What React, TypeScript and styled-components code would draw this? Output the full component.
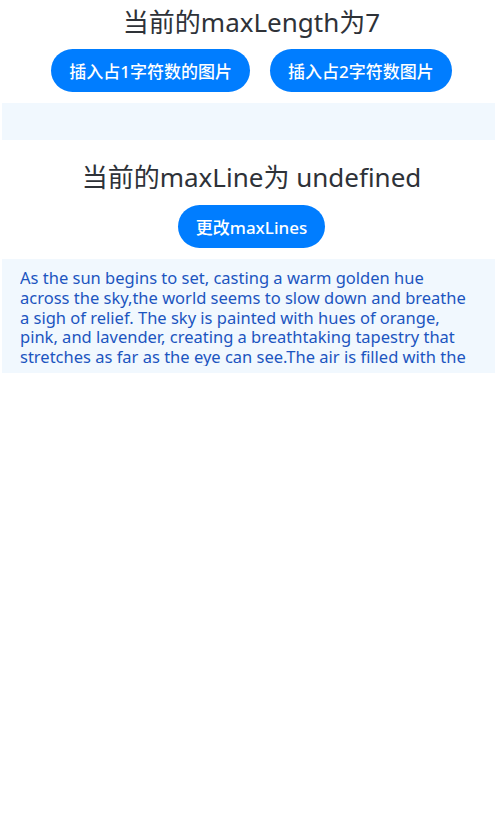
import styled, { createGlobalStyle } from 'styled-components';

const GlobalStyle = createGlobalStyle`
  body {
    margin: 0;
    background: #ffffff;
    font-family: "Noto Sans", "Noto Sans CJK SC", sans-serif;
  }
`;

const LONG_TEXT =
  'As the sun begins to set, casting a warm golden hue across the sky,the world seems to slow down and breathe a sigh of relief. The sky is painted with hues of orange, pink, and lavender, creating a breathtaking tapestry that stretches as far as the eye can see.The air is filled with the sweet scent of blooming flowers and the gentle rustle of leaves.';

const App = () => {
  return (
    <Page>
      <GlobalStyle />
      <Title>当前的maxLength为7</Title>
      <ButtonRow>
        <PillButton>插入占1字符数的图片</PillButton>
        <PillButton>插入占2字符数图片</PillButton>
      </ButtonRow>
      <Panel />
      <Title $spaced>当前的maxLine为 undefined</Title>
      <PillButton>更改maxLines</PillButton>
      <TextPanel>
        <ClippedText>{LONG_TEXT}</ClippedText>
      </TextPanel>
    </Page>
  );
};

const Page = styled.div`
  display: flex;
  flex-direction: column;
  align-items: center;
  width: 503px;
  height: 824px;
  box-sizing: border-box;
  padding-top: 5px;
`;

const Title = styled.div<{ $spaced?: boolean }>`
  font-size: 26px;
  line-height: 34px;
  color: #2e3238;
  margin-top: ${({ $spaced }) => ($spaced ? '20px' : '0')};
`;

const ButtonRow = styled.div`
  display: flex;
  gap: 20px;
  margin-top: 10px;
`;

const PillButton = styled.button`
  height: 43px;
  padding: 0 18px;
  border: none;
  border-radius: 22px;
  background: #007dff;
  color: #ffffff;
  font-family: "Noto Sans", "Noto Sans CJK SC", sans-serif;
  font-size: 17px;
  font-weight: 500;
  margin-top: 11px;
  ${ButtonRow} & {
    margin-top: 0;
  }
`;

const Panel = styled.div`
  align-self: flex-start;
  margin: 11px 0 0 2px;
  width: 493px;
  height: 37px;
  background: #f1f8fe;
`;

const TextPanel = styled.div`
  align-self: flex-start;
  margin: 11px 0 0 2px;
  width: 493px;
  height: 114px;
  box-sizing: border-box;
  padding: 9px 18px 0;
  background: #f1f8fe;
  color: #1c55c0;
  font-size: 16.5px;
  line-height: 19.8px;
`;

const ClippedText = styled.div`
  height: 98px;
  overflow: hidden;
`;

export default App;
